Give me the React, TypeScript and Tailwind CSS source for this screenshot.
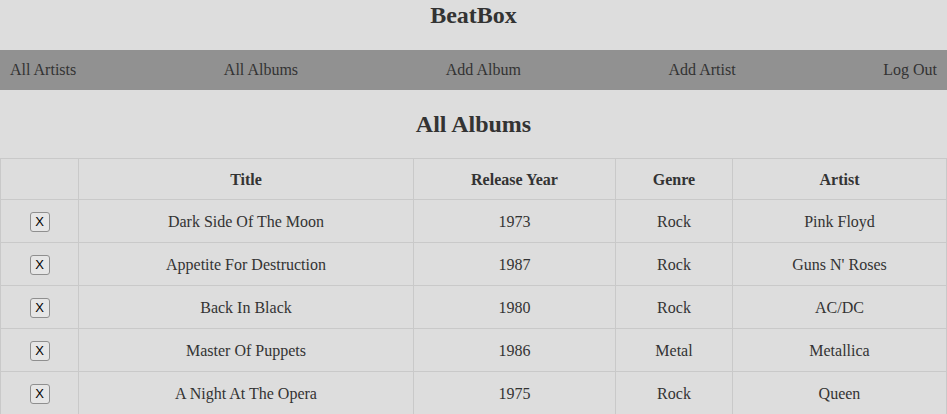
const NAV = ['All Artists', 'All Albums', 'Add Album', 'Add Artist', 'Log Out']

const ALBUMS = [
  { title: 'Dark Side Of The Moon', year: 1973, genre: 'Rock', artist: 'Pink Floyd' },
  { title: 'Appetite For Destruction', year: 1987, genre: 'Rock', artist: "Guns N' Roses" },
  { title: 'Back In Black', year: 1980, genre: 'Rock', artist: 'AC/DC' },
  { title: 'Master Of Puppets', year: 1986, genre: 'Metal', artist: 'Metallica' },
  { title: 'A Night At The Opera', year: 1975, genre: 'Rock', artist: 'Queen' },
]

const cell = 'border border-[#c9c9c9] pt-[2px]'

export default function App() {
  return (
    <div className="min-h-screen bg-[#dddddd] text-[#333333] font-['Liberation_Serif',serif]">
      <header className="h-[50px] flex items-start justify-center">
        <h1 className="text-[24px] font-bold leading-[30px]">BeatBox</h1>
      </header>

      <nav className="h-[40px] bg-[#919191] flex items-center justify-between px-[10px] text-[16px]">
        {NAV.map((n) => (
          <a key={n} href="#" className="text-[#333333]">{n}</a>
        ))}
      </nav>

      <h2 className="h-[68px] flex items-center justify-center text-[24px] font-bold">All Albums</h2>

      <table className="w-full border-collapse text-[16px] table-fixed">
        <colgroup>
          <col className="w-[78px]" />
          <col className="w-[335px]" />
          <col className="w-[202px]" />
          <col className="w-[117px]" />
          <col />
        </colgroup>
        <thead>
          <tr className="h-[41px]">
            <th className={cell}></th>
            <th className={`${cell} font-bold`}>Title</th>
            <th className={`${cell} font-bold`}>Release Year</th>
            <th className={`${cell} font-bold`}>Genre</th>
            <th className={`${cell} font-bold`}>Artist</th>
          </tr>
        </thead>
        <tbody>
          {ALBUMS.map((a) => (
            <tr key={a.title} className="h-[43px] text-center">
              <td className={cell}>
                <button className="w-[20px] h-[20px] inline-flex items-center justify-center border border-[#8f8f8f] rounded-[3px] bg-[#e6e6e6] text-black text-[13px] font-['Liberation_Sans',sans-serif] leading-none align-middle -mt-[3px]">
                  X
                </button>
              </td>
              <td className={cell}>{a.title}</td>
              <td className={cell}>{a.year}</td>
              <td className={cell}>{a.genre}</td>
              <td className={cell}>{a.artist}</td>
            </tr>
          ))}
        </tbody>
      </table>
    </div>
  )
}
